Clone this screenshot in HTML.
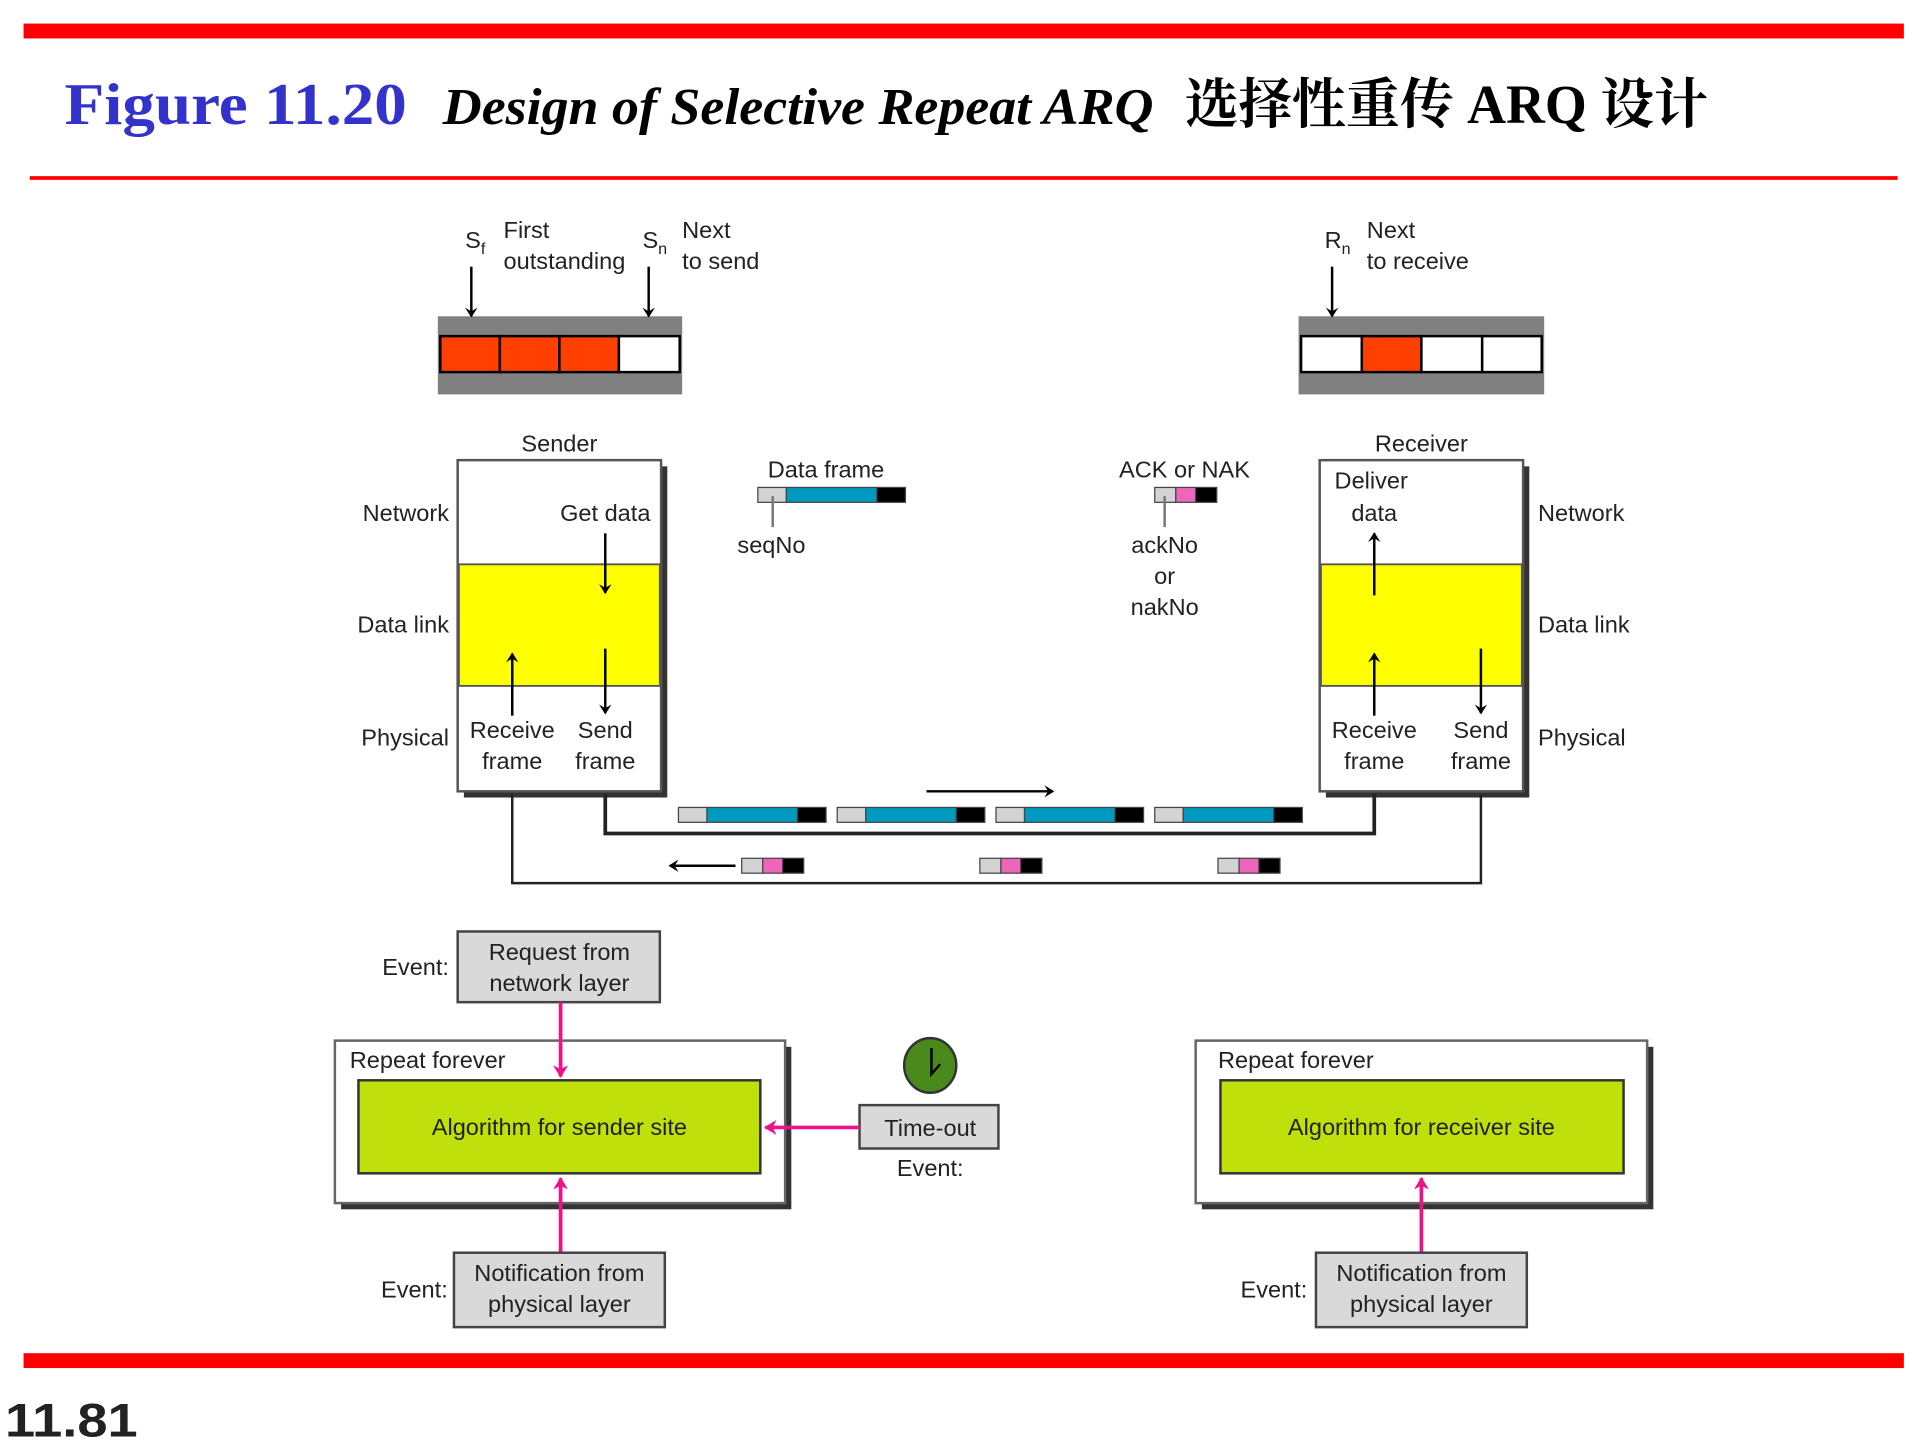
<!DOCTYPE html>
<html><head><meta charset="utf-8"><style>html,body{margin:0;padding:0;background:#fff}svg{display:block}</style></head>
<body>
<svg width="1920" height="1440" viewBox="0 0 1548 1161" preserveAspectRatio="none" xmlns="http://www.w3.org/2000/svg" font-family="'Liberation Sans', sans-serif">
<defs>
<marker id="ah" markerWidth="8" markerHeight="10" refX="7" refY="5" orient="auto" markerUnits="userSpaceOnUse"><path d="M0,0 L8,5 L0,10 L3,5 Z" fill="#000"/></marker>
<marker id="ap" markerWidth="10" markerHeight="12" refX="9" refY="6" orient="auto" markerUnits="userSpaceOnUse"><path d="M0,0 L10,6 L0,12 L3,6 Z" fill="#ee1188"/></marker>
</defs>
<rect x="19" y="19" width="1516" height="12" fill="#ff0000"/>
<rect x="24" y="142" width="1506" height="3" fill="#ff0000"/>
<rect x="19" y="1091" width="1516" height="12" fill="#ff0000"/>
<text x="52" y="100" font-family="'Liberation Serif', serif" font-weight="bold" font-size="48" fill="#3333cc" textLength="276" lengthAdjust="spacingAndGlyphs">Figure 11.20</text>
<text x="357" y="100" font-family="'Liberation Serif', 'Noto Serif CJK SC', serif" font-weight="bold" font-style="italic" font-size="42" fill="#000" textLength="573" lengthAdjust="spacingAndGlyphs">Design of Selective Repeat ARQ</text>
<text x="955" y="99" font-family="'Liberation Serif', 'Noto Serif CJK SC', serif" font-weight="bold" font-size="44" fill="#000" textLength="422" lengthAdjust="spacingAndGlyphs">选择性重传 ARQ 设计</text>
<text x="4" y="1158" font-weight="bold" font-size="38" fill="#222" textLength="107" lengthAdjust="spacingAndGlyphs">11.81</text>

<g font-size="19" fill="#222">
<rect x="353" y="255" width="197" height="63" fill="#808080"/>
<rect x="355" y="271" width="48" height="29" fill="#ff4000" stroke="#000" stroke-width="2"/>
<rect x="403" y="271" width="48" height="29" fill="#ff4000" stroke="#000" stroke-width="2"/>
<rect x="451" y="271" width="48" height="29" fill="#ff4000" stroke="#000" stroke-width="2"/>
<rect x="499" y="271" width="49" height="29" fill="#fff" stroke="#000" stroke-width="2"/>
<line x1="380" y1="215" x2="380" y2="255" stroke="#000" stroke-width="2" marker-end="url(#ah)"/>
<line x1="523" y1="215" x2="523" y2="255" stroke="#000" stroke-width="2" marker-end="url(#ah)"/>
<text x="375" y="200">S<tspan font-size="13" dy="5">f</tspan></text>
<text x="406" y="192">First</text><text x="406" y="217">outstanding</text>
<text x="518" y="200">S<tspan font-size="13" dy="5">n</tspan></text>
<text x="550" y="192">Next</text><text x="550" y="217">to send</text>

<rect x="1047" y="255" width="198" height="63" fill="#808080"/>
<rect x="1049" y="271" width="49" height="29" fill="#fff" stroke="#000" stroke-width="2"/>
<rect x="1098" y="271" width="48" height="29" fill="#ff4000" stroke="#000" stroke-width="2"/>
<rect x="1146" y="271" width="49" height="29" fill="#fff" stroke="#000" stroke-width="2"/>
<rect x="1195" y="271" width="48" height="29" fill="#fff" stroke="#000" stroke-width="2"/>
<line x1="1074" y1="215" x2="1074" y2="255" stroke="#000" stroke-width="2" marker-end="url(#ah)"/>
<text x="1068" y="200">R<tspan font-size="13" dy="5">n</tspan></text>
<text x="1102" y="192">Next</text><text x="1102" y="217">to receive</text>

<rect x="374" y="376" width="164" height="267" fill="#333"/>
<rect x="369" y="371" width="164" height="267" fill="#fff" stroke="#555" stroke-width="2"/>
<rect x="370" y="455" width="162" height="98" fill="#ffff00" stroke="#555" stroke-width="1.5"/>
<text x="451" y="364" text-anchor="middle">Sender</text>
<text x="362" y="420" text-anchor="end">Network</text>
<text x="362" y="510" text-anchor="end">Data link</text>
<text x="362" y="601" text-anchor="end">Physical</text>
<text x="488" y="420" text-anchor="middle">Get data</text>
<line x1="488" y1="430" x2="488" y2="478" stroke="#000" stroke-width="2" marker-end="url(#ah)"/>
<line x1="413" y1="577" x2="413" y2="527" stroke="#000" stroke-width="2" marker-end="url(#ah)"/>
<line x1="488" y1="523" x2="488" y2="575" stroke="#000" stroke-width="2" marker-end="url(#ah)"/>
<text x="413" y="595" text-anchor="middle">Receive</text><text x="413" y="620" text-anchor="middle">frame</text>
<text x="488" y="595" text-anchor="middle">Send</text><text x="488" y="620" text-anchor="middle">frame</text>

<rect x="1069" y="376" width="164" height="267" fill="#333"/>
<rect x="1064" y="371" width="164" height="267" fill="#fff" stroke="#555" stroke-width="2"/>
<rect x="1065" y="455" width="162" height="98" fill="#ffff00" stroke="#555" stroke-width="1.5"/>
<text x="1146" y="364" text-anchor="middle">Receiver</text>
<text x="1076" y="394">Deliver</text><text x="1108" y="420" text-anchor="middle">data</text>
<line x1="1108" y1="480" x2="1108" y2="430" stroke="#000" stroke-width="2" marker-end="url(#ah)"/>
<line x1="1108" y1="577" x2="1108" y2="527" stroke="#000" stroke-width="2" marker-end="url(#ah)"/>
<line x1="1194" y1="523" x2="1194" y2="575" stroke="#000" stroke-width="2" marker-end="url(#ah)"/>
<text x="1108" y="595" text-anchor="middle">Receive</text><text x="1108" y="620" text-anchor="middle">frame</text>
<text x="1194" y="595" text-anchor="middle">Send</text><text x="1194" y="620" text-anchor="middle">frame</text>
<text x="1240" y="420">Network</text>
<text x="1240" y="510">Data link</text>
<text x="1240" y="601">Physical</text>

<polyline points="488,640 488,672 1108,672 1108,640" fill="none" stroke="#222" stroke-width="3"/>
<polyline points="413,640 413,712 1194,712 1194,640" fill="none" stroke="#222" stroke-width="2"/>
<line x1="747" y1="638" x2="849" y2="638" stroke="#000" stroke-width="2" marker-end="url(#ah)"/>
<line x1="593" y1="698" x2="540" y2="698" stroke="#000" stroke-width="2" marker-end="url(#ah)"/>
<g stroke="#444" stroke-width="1">
<rect x="547" y="651" width="23" height="12" fill="#d3d3d3"/><rect x="570" y="651" width="73" height="12" fill="#0099c0"/><rect x="643" y="651" width="23" height="12" fill="#000"/>
<rect x="675" y="651" width="23" height="12" fill="#d3d3d3"/><rect x="698" y="651" width="73" height="12" fill="#0099c0"/><rect x="771" y="651" width="23" height="12" fill="#000"/>
<rect x="803" y="651" width="23" height="12" fill="#d3d3d3"/><rect x="826" y="651" width="73" height="12" fill="#0099c0"/><rect x="899" y="651" width="23" height="12" fill="#000"/>
<rect x="931" y="651" width="23" height="12" fill="#d3d3d3"/><rect x="954" y="651" width="73" height="12" fill="#0099c0"/><rect x="1027" y="651" width="23" height="12" fill="#000"/>
<rect x="598" y="692" width="17" height="12" fill="#d3d3d3"/><rect x="615" y="692" width="16" height="12" fill="#ee66bb"/><rect x="631" y="692" width="17" height="12" fill="#000"/>
<rect x="790" y="692" width="17" height="12" fill="#d3d3d3"/><rect x="807" y="692" width="16" height="12" fill="#ee66bb"/><rect x="823" y="692" width="17" height="12" fill="#000"/>
<rect x="982" y="692" width="17" height="12" fill="#d3d3d3"/><rect x="999" y="692" width="16" height="12" fill="#ee66bb"/><rect x="1015" y="692" width="17" height="12" fill="#000"/>
<rect x="611" y="393" width="23" height="12" fill="#d3d3d3"/><rect x="634" y="393" width="73" height="12" fill="#0099c0"/><rect x="707" y="393" width="23" height="12" fill="#000"/>
<rect x="931" y="393" width="17" height="12" fill="#d3d3d3"/><rect x="948" y="393" width="16" height="12" fill="#ee66bb"/><rect x="964" y="393" width="17" height="12" fill="#000"/>
</g>
<line x1="623" y1="400" x2="623" y2="425" stroke="#777" stroke-width="2"/>
<line x1="939" y1="400" x2="939" y2="425" stroke="#777" stroke-width="2"/>
<text x="666" y="385" text-anchor="middle">Data frame</text>
<text x="622" y="446" text-anchor="middle">seqNo</text>
<text x="955" y="385" text-anchor="middle">ACK or NAK</text>
<text x="939" y="446" text-anchor="middle">ackNo</text>
<text x="939" y="471" text-anchor="middle">or</text>
<text x="939" y="496" text-anchor="middle">nakNo</text>

<rect x="369" y="751" width="163" height="57" fill="#d9d9d9" stroke="#444" stroke-width="2"/>
<text x="451" y="774" text-anchor="middle">Request from</text><text x="451" y="799" text-anchor="middle">network layer</text>
<text x="362" y="786" text-anchor="end">Event:</text>
<rect x="275" y="844" width="363" height="131" fill="#333"/>
<rect x="270" y="839" width="363" height="131" fill="#fff" stroke="#666" stroke-width="2"/>
<text x="282" y="861">Repeat forever</text>
<rect x="289" y="871" width="324" height="75" fill="#bfe00b" stroke="#333" stroke-width="2"/>
<text x="451" y="915" text-anchor="middle">Algorithm for sender site</text>
<line x1="452" y1="808" x2="452" y2="868" stroke="#ee1188" stroke-width="3" marker-end="url(#ap)"/>
<line x1="452" y1="1010" x2="452" y2="950" stroke="#ee1188" stroke-width="3" marker-end="url(#ap)"/>
<rect x="366" y="1010" width="170" height="60" fill="#d9d9d9" stroke="#444" stroke-width="2"/>
<text x="451" y="1033" text-anchor="middle">Notification from</text><text x="451" y="1058" text-anchor="middle">physical layer</text>
<text x="361" y="1046" text-anchor="end">Event:</text>
<ellipse cx="750" cy="859" rx="21" ry="22" fill="#4a8a1c" stroke="#333" stroke-width="2"/>
<polyline points="751,845 751,866 758,858" fill="none" stroke="#000" stroke-width="2"/>
<rect x="693" y="891" width="112" height="35" fill="#d9d9d9" stroke="#444" stroke-width="2"/>
<text x="750" y="916" text-anchor="middle">Time-out</text>
<text x="750" y="948" text-anchor="middle">Event:</text>
<line x1="693" y1="909" x2="617" y2="909" stroke="#ee1188" stroke-width="3" marker-end="url(#ap)"/>

<rect x="969" y="844" width="364" height="131" fill="#333"/>
<rect x="964" y="839" width="364" height="131" fill="#fff" stroke="#666" stroke-width="2"/>
<text x="982" y="861">Repeat forever</text>
<rect x="984" y="871" width="325" height="75" fill="#bfe00b" stroke="#333" stroke-width="2"/>
<text x="1146" y="915" text-anchor="middle">Algorithm for receiver site</text>
<line x1="1146" y1="1010" x2="1146" y2="950" stroke="#ee1188" stroke-width="3" marker-end="url(#ap)"/>
<rect x="1061" y="1010" width="170" height="60" fill="#d9d9d9" stroke="#444" stroke-width="2"/>
<text x="1146" y="1033" text-anchor="middle">Notification from</text><text x="1146" y="1058" text-anchor="middle">physical layer</text>
<text x="1054" y="1046" text-anchor="end">Event:</text>
</g>
</svg>
</body></html>
